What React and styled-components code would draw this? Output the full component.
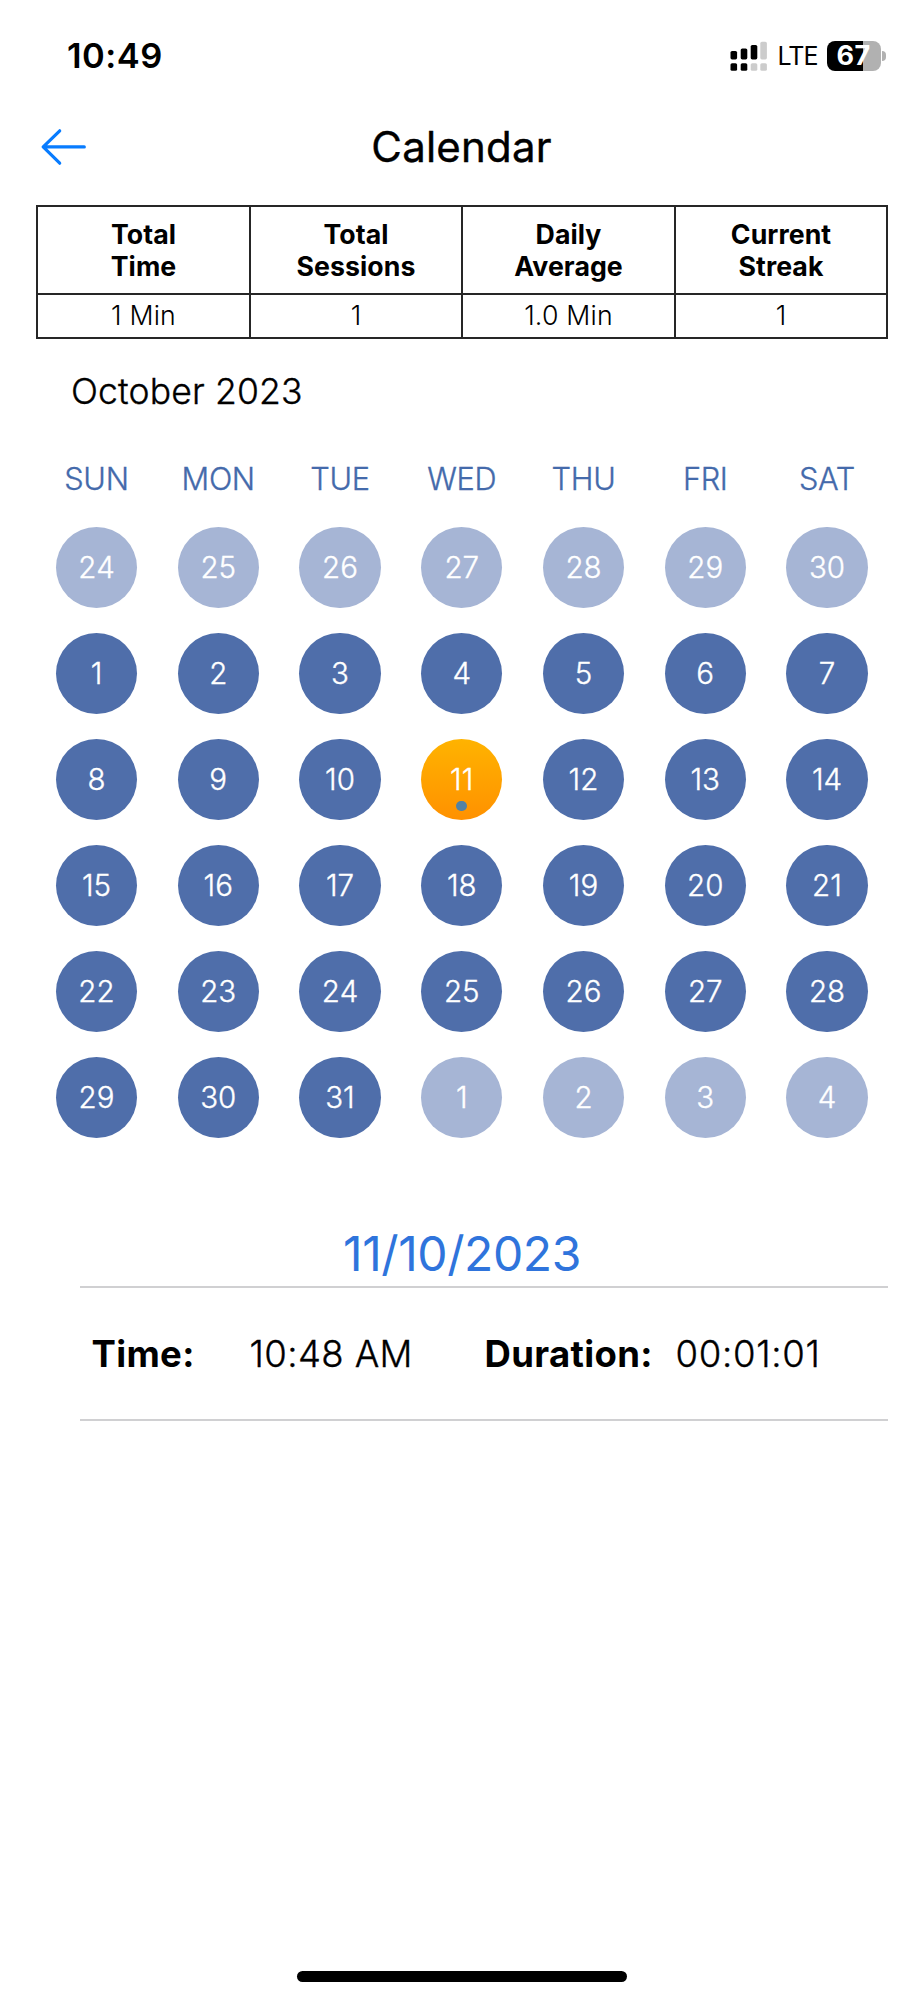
import React from 'react';
import styled, { createGlobalStyle, css } from 'styled-components';

const GlobalStyle = createGlobalStyle`
  * { box-sizing: border-box; }
  body {
    margin: 0;
    background: #fff;
    color: #000;
    font-family: Inter, "Liberation Sans", sans-serif;
  }
`;

const Screen = styled.main`
  display: flex;
  flex-direction: column;
  width: 924px;
  height: 2000px;
  background: #fff;
  overflow: hidden;
`;

/* Sits between the light and regular weights. */
const bookWeight = css`
  font-weight: 300;
  -webkit-text-stroke: 0.35px currentColor;
`;

const StatusBar = styled.header`
  display: flex;
  align-items: center;
  justify-content: space-between;
  height: 111px;
  padding: 0 38.5px 0 67px;
`;

const Clock = styled.time`
  font-size: 34.5px;
  font-weight: 600;
  letter-spacing: 0.5px;
`;

const StatusIcons = styled.div`
  display: flex;
  align-items: center;
`;

const SignalIcon = styled.svg`
  display: block;
  width: 37px;
  height: 30px;
  margin-right: 10.5px;
`;

const Network = styled.span`
  width: 49px;
  font-size: 25px;
  line-height: 30px;
  letter-spacing: -0.9px;
  padding-top: 1px;
`;

const Battery = styled.div`
  display: flex;
  align-items: center;
  gap: 1.5px;
`;

const BatteryBody = styled.div`
  width: 54px;
  height: 30px;
  border-radius: 8px;
  background: linear-gradient(to right, #000 66%, #b1b1b1 66%);
  color: #fff;
  font-size: 27px;
  font-weight: 700;
  line-height: 30px;
  letter-spacing: 0.3px;
  text-align: center;
`;

const BatteryTip = styled.div`
  width: 3.5px;
  height: 10px;
  border-radius: 0 4px 4px 0;
  background: #b1b1b1;
`;

const NavBar = styled.nav`
  display: grid;
  grid-template-columns: 100px 1fr 100px;
  align-items: center;
  height: 73px;
  margin-bottom: 21px;
`;

const BackButton = styled.button`
  display: flex;
  padding: 0 0 1px 40px;
  border: 0;
  background: none;
  color: #087cff;
`;

const Title = styled.h1`
  margin: 0;
  font-size: 42px;
  font-weight: 400;
  -webkit-text-stroke: 0.4px currentColor;
  line-height: 50px;
  letter-spacing: 0.2px;
  text-align: center;
  padding: 0 1px 1px 0;
`;

const StatsTable = styled.section`
  display: grid;
  grid-template-columns: 211px 210px 211px 210px;
  grid-template-rows: 86px 42px;
  gap: 2px;
  width: 852px;
  margin-left: 36px;
  border: 2px solid #262626;
  background: #262626;
`;

const StatCell = styled.div`
  display: flex;
  align-items: center;
  justify-content: center;
  background: #fff;
  font-size: 26.7px;
  font-weight: 300;
  line-height: 32.5px;
  letter-spacing: 0.2px;
  padding-bottom: 2px;
`;

const StatHeading = styled(StatCell)`
  font-weight: 700;
  letter-spacing: 0.05px;
  text-align: center;
  white-space: pre-line;
  padding-bottom: 0;
`;

const MonthTitle = styled.h2`
  ${bookWeight}
  margin: 28px 0 0 71px;
  font-size: 35.5px;
  line-height: 50px;
  letter-spacing: 0.15px;
`;

const calendarGrid = css`
  display: grid;
  grid-template-columns: repeat(7, 121.75px);
  justify-items: center;
  margin-left: 35.6px;
`;

const Weekdays = styled.div`
  ${calendarGrid}
  ${bookWeight}
  margin-top: 42px;
  height: 40px;
  color: #446aab;
  font-size: 30.7px;
  line-height: 40px;
  letter-spacing: -0.3px;
`;

const Days = styled.div`
  ${calendarGrid}
  grid-auto-rows: 106px;
  align-items: center;
  margin-top: 15.5px;
`;

const Day = styled.div`
  ${bookWeight}
  position: relative;
  display: flex;
  align-items: center;
  justify-content: center;
  width: 81.4px;
  height: 81.4px;
  border-radius: 50%;
  background: ${({ $kind }) =>
    $kind === 'today'
      ? 'linear-gradient(#ffb300, #ff9100)'
      : $kind === 'outside'
        ? '#a6b5d5'
        : '#4f6eaa'};
  color: #fff;
  font-size: 29.5px;
  font-kerning: none;
  line-height: 36px;
`;

const EventDot = styled.span`
  position: absolute;
  bottom: 9px;
  left: 50%;
  width: 10.5px;
  height: 10.5px;
  margin-left: -5.25px;
  border-radius: 50%;
  background: #5282a4;
`;

const SelectedDate = styled.h2`
  margin: 73px 0 0;
  color: #2f74dc;
  font-size: 48px;
  font-weight: 400;
  line-height: 60px;
  letter-spacing: -0.4px;
  text-align: center;
`;

const SessionRow = styled.section`
  display: grid;
  grid-template-columns: 158px 235px 191px 1fr;
  align-items: center;
  width: 808px;
  height: 135px;
  margin: 2px 0 0 80px;
  padding: 1px 0 0 11.5px;
  border: solid #d0d0d2;
  border-width: 2px 0;
  font-size: 36.5px;
  line-height: 48px;
  white-space: nowrap;
`;

const Label = styled.span`
  font-weight: 700;
  letter-spacing: 0.35px;
`;

const Value = styled.span`
  ${bookWeight}
  letter-spacing: ${({ $tracking }) => $tracking}px;
`;

const HomeIndicator = styled.div`
  width: 330px;
  height: 11px;
  margin: auto auto 18px 297px;
  border-radius: 6px;
  background: #000;
`;

const stats = [
  ['Total\nTime', '1 Min'],
  ['Total\nSessions', '1'],
  ['Daily\nAverage', '1.0 Min'],
  ['Current\nStreak', '1'],
];

const weekdays = ['SUN', 'MON', 'TUE', 'WED', 'THU', 'FRI', 'SAT'];

const days = [
  ...[24, 25, 26, 27, 28, 29, 30].map((n) => ({ n, kind: 'outside' })),
  ...Array.from({ length: 31 }, (_, i) => ({ n: i + 1, kind: i + 1 === 11 ? 'today' : 'month' })),
  ...[1, 2, 3, 4].map((n) => ({ n, kind: 'outside' })),
];

const signalBars = [
  { x: 0.5, top: 10, low: '#000', high: '#000' },
  { x: 10.7, top: 7.5, low: '#000', high: '#000' },
  { x: 20.7, top: 4, low: '#ccc', high: '#000' },
  { x: 30.3, top: 0.8, low: '#ccc', high: '#ccc' },
];

function Signal() {
  return (
    <SignalIcon viewBox="0 0 37 30" aria-hidden="true">
      {signalBars.map(({ x, top, low, high }) => (
        <g key={x}>
          <rect x={x} y={top} width="6.6" height={18.4 - top} rx="1.6" fill={high} />
          <rect x={x} y="22.2" width="6.6" height="7.6" rx="1.6" fill={low} />
        </g>
      ))}
    </SignalIcon>
  );
}

function BackArrow() {
  return (
    <svg width="48" height="38" viewBox="0 0 48 38" fill="none" stroke="currentColor" strokeWidth="3.2" strokeLinecap="round" strokeLinejoin="round">
      <path d="M44.3 18.9H3.2M19.7 2.8L3.2 18.9L19.7 35.2" />
    </svg>
  );
}

export default function App() {
  return (
    <Screen>
      <GlobalStyle />
      <StatusBar>
        <Clock>10:49</Clock>
        <StatusIcons>
          <Signal />
          <Network>LTE</Network>
          <Battery>
            <BatteryBody>67</BatteryBody>
            <BatteryTip />
          </Battery>
        </StatusIcons>
      </StatusBar>
      <NavBar>
        <BackButton aria-label="Back">
          <BackArrow />
        </BackButton>
        <Title>Calendar</Title>
      </NavBar>
      <StatsTable>
        {stats.map(([heading]) => (
          <StatHeading key={heading}>{heading}</StatHeading>
        ))}
        {stats.map(([heading, value]) => (
          <StatCell key={heading}>{value}</StatCell>
        ))}
      </StatsTable>
      <MonthTitle>October 2023</MonthTitle>
      <Weekdays>
        {weekdays.map((name) => (
          <span key={name}>{name}</span>
        ))}
      </Weekdays>
      <Days>
        {days.map(({ n, kind }, i) => (
          <Day key={i} $kind={kind}>
            {n}
            {kind === 'today' && <EventDot />}
          </Day>
        ))}
      </Days>
      <SelectedDate>11/10/2023</SelectedDate>
      <SessionRow>
        <Label>Time:</Label>
        <Value $tracking={0.4}>10:48 AM</Value>
        <Label>Duration:</Label>
        <Value $tracking={0.7}>00:01:01</Value>
      </SessionRow>
      <HomeIndicator />
    </Screen>
  );
}
